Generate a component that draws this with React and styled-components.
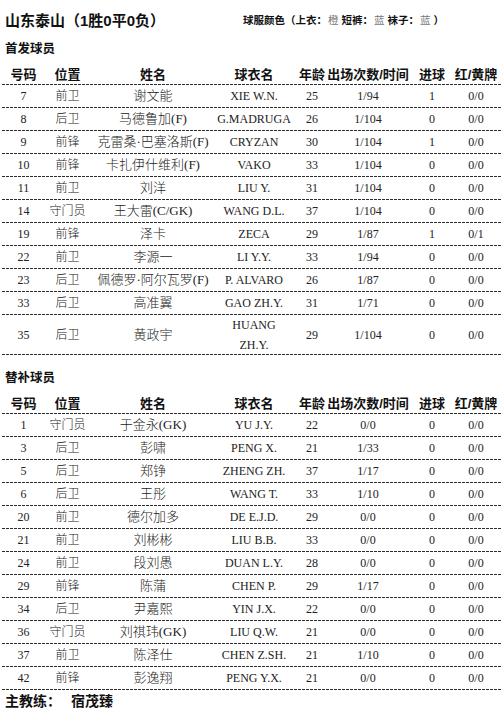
import React from 'react';
import styled, { createGlobalStyle } from 'styled-components';

const starters = [
    ['7', '前卫', '谢文能', 'XIE W.N.', '25', '1/94', '1', '0/0'],
    ['8', '后卫', '马德鲁加(F)', 'G.MADRUGA', '26', '1/104', '0', '0/0'],
    ['9', '前锋', '克雷桑·巴塞洛斯(F)', 'CRYZAN', '30', '1/104', '1', '0/0'],
    ['10', '前锋', '卡扎伊什维利(F)', 'VAKO', '33', '1/104', '0', '0/0'],
    ['11', '前卫', '刘洋', 'LIU Y.', '31', '1/104', '0', '0/0'],
    ['14', '守门员', '王大雷(C/GK)', 'WANG D.L.', '37', '1/104', '0', '0/0'],
    ['19', '前锋', '泽卡', 'ZECA', '29', '1/87', '1', '0/1'],
    ['22', '前卫', '李源一', 'LI Y.Y.', '33', '1/94', '0', '0/0'],
    ['23', '后卫', '佩德罗·阿尔瓦罗(F)', 'P. ALVARO', '26', '1/87', '0', '0/0'],
    ['33', '后卫', '高准翼', 'GAO ZH.Y.', '31', '1/71', '0', '0/0'],
    ['35', '后卫', '黄政宇', ['HUANG', 'ZH.Y.'], '29', '1/104', '0', '0/0'],
];

const subs = [
    ['1', '守门员', '于金永(GK)', 'YU J.Y.', '22', '0/0', '0', '0/0'],
    ['3', '后卫', '彭啸', 'PENG X.', '21', '1/33', '0', '0/0'],
    ['5', '后卫', '郑铮', 'ZHENG ZH.', '37', '1/17', '0', '0/0'],
    ['6', '后卫', '王彤', 'WANG T.', '33', '1/10', '0', '0/0'],
    ['20', '前卫', '德尔加多', 'DE E.J.D.', '29', '0/0', '0', '0/0'],
    ['21', '前卫', '刘彬彬', 'LIU B.B.', '33', '0/0', '0', '0/0'],
    ['24', '前卫', '段刘愚', 'DUAN L.Y.', '28', '0/0', '0', '0/0'],
    ['29', '前锋', '陈蒲', 'CHEN P.', '29', '1/17', '0', '0/0'],
    ['34', '后卫', '尹嘉熙', 'YIN J.X.', '22', '0/0', '0', '0/0'],
    ['36', '守门员', '刘祺玮(GK)', 'LIU Q.W.', '21', '0/0', '0', '0/0'],
    ['37', '前卫', '陈泽仕', 'CHEN Z.SH.', '21', '1/10', '0', '0/0'],
    ['42', '前锋', '彭逸翔', 'PENG Y.X.', '21', '0/0', '0', '0/0'],
];

const headers = ['号码', '位置', '姓名', '球衣名', '年龄', '出场次数/时间', '进球', '红/黄牌'];

const GlobalStyle = createGlobalStyle`
    html, body {
        margin: 0;
        padding: 0;
        background: #fff;
    }
`;

const Page = styled.div`
    width: 501px;
    height: 712px;
    overflow: hidden;
    padding-left: 2px;
    box-sizing: border-box;
    font-family: "Liberation Serif", "Noto Sans CJK SC", serif;
    color: #222;
`;

const TopBar = styled.div`
    display: flex;
    align-items: center;
    height: 38px;
    padding-left: 3px;
`;

const TeamTitle = styled.h1`
    margin: 0;
    width: 238px;
    font-family: "Liberation Sans", "Noto Sans CJK SC", sans-serif;
    font-size: 15px;
    font-weight: 700;
    color: #111;
`;

const Kit = styled.div`
    font-family: "Liberation Sans", "Noto Sans CJK SC", sans-serif;
    font-size: 10.5px;
    font-weight: 700;
    color: #111;
    white-space: nowrap;
`;

const KitColour = styled.span`
    font-weight: 400;
    color: #777;
    margin: 0 3px 0 1px;
`;

const SectionTitle = styled.h2`
    margin: ${p => (p.$gap ? '12px' : '0')} 0 0;
    padding-left: 3px;
    height: 22px;
    line-height: 22px;
    font-family: "Liberation Sans", "Noto Sans CJK SC", sans-serif;
    font-size: 12.5px;
    font-weight: 700;
    color: #111;
`;

const Row = styled.div`
    display: grid;
    grid-template-columns: 43px 45px 126px 76px 40px 72px 56px 32px;
    height: ${p => (p.$head ? '17px' : p.$tall ? '38px' : '21px')};
    padding-top: ${p => (p.$head ? '6px' : '0')};
    padding-bottom: 2px;
    background-image: repeating-linear-gradient(90deg, #2a2a2a 0 3px, transparent 3px 4px);
    background-size: 100% 1.5px;
    background-position: left bottom;
    background-repeat: no-repeat;
`;

const Cell = styled.div`
    display: flex;
    flex-direction: column;
    align-items: center;
    justify-content: center;
    white-space: nowrap;
    text-align: center;
    font-size: ${p => (p.$name ? '13px' : '12px')};
    line-height: 20px;
    font-weight: 300;
`;

const HeadCell = styled(Cell)`
    font-family: "Liberation Sans", "Noto Sans CJK SC", sans-serif;
    font-size: 13px;
    font-weight: 700;
    line-height: 17px;
    color: #111;
`;

const Coach = styled.div`
    height: 22px;
    line-height: 22px;
    padding-left: 3px;
    font-family: "Liberation Sans", "Noto Sans CJK SC", sans-serif;
    font-size: 14px;
    font-weight: 700;
    color: #111;
    span {
        margin-left: 10px;
    }
`;

const PlayerTable = ({ rows }) => (
    <div>
        <Row $head>
            {headers.map(h => <HeadCell key={h}>{h}</HeadCell>)}
        </Row>
        {rows.map(r => (
            <Row key={r[0]} $tall={Array.isArray(r[3])}>
                {r.map((v, i) => (
                    <Cell key={i} $name={i === 2}>
                        {Array.isArray(v) ? v.map(line => <span key={line}>{line}</span>) : v}
                    </Cell>
                ))}
            </Row>
        ))}
    </div>
);

export default function App() {
    return (
        <Page>
            <GlobalStyle />
            <TopBar>
                <TeamTitle>山东泰山（1胜0平0负）</TeamTitle>
                <Kit>
                    球服颜色（上衣：<KitColour>橙</KitColour>短裤：<KitColour>蓝</KitColour>袜子：<KitColour>蓝</KitColour>）
                </Kit>
            </TopBar>
            <SectionTitle>首发球员</SectionTitle>
            <PlayerTable rows={starters} />
            <SectionTitle $gap>替补球员</SectionTitle>
            <PlayerTable rows={subs} />
            <Coach>主教练：<span>宿茂臻</span></Coach>
        </Page>
    );
}
